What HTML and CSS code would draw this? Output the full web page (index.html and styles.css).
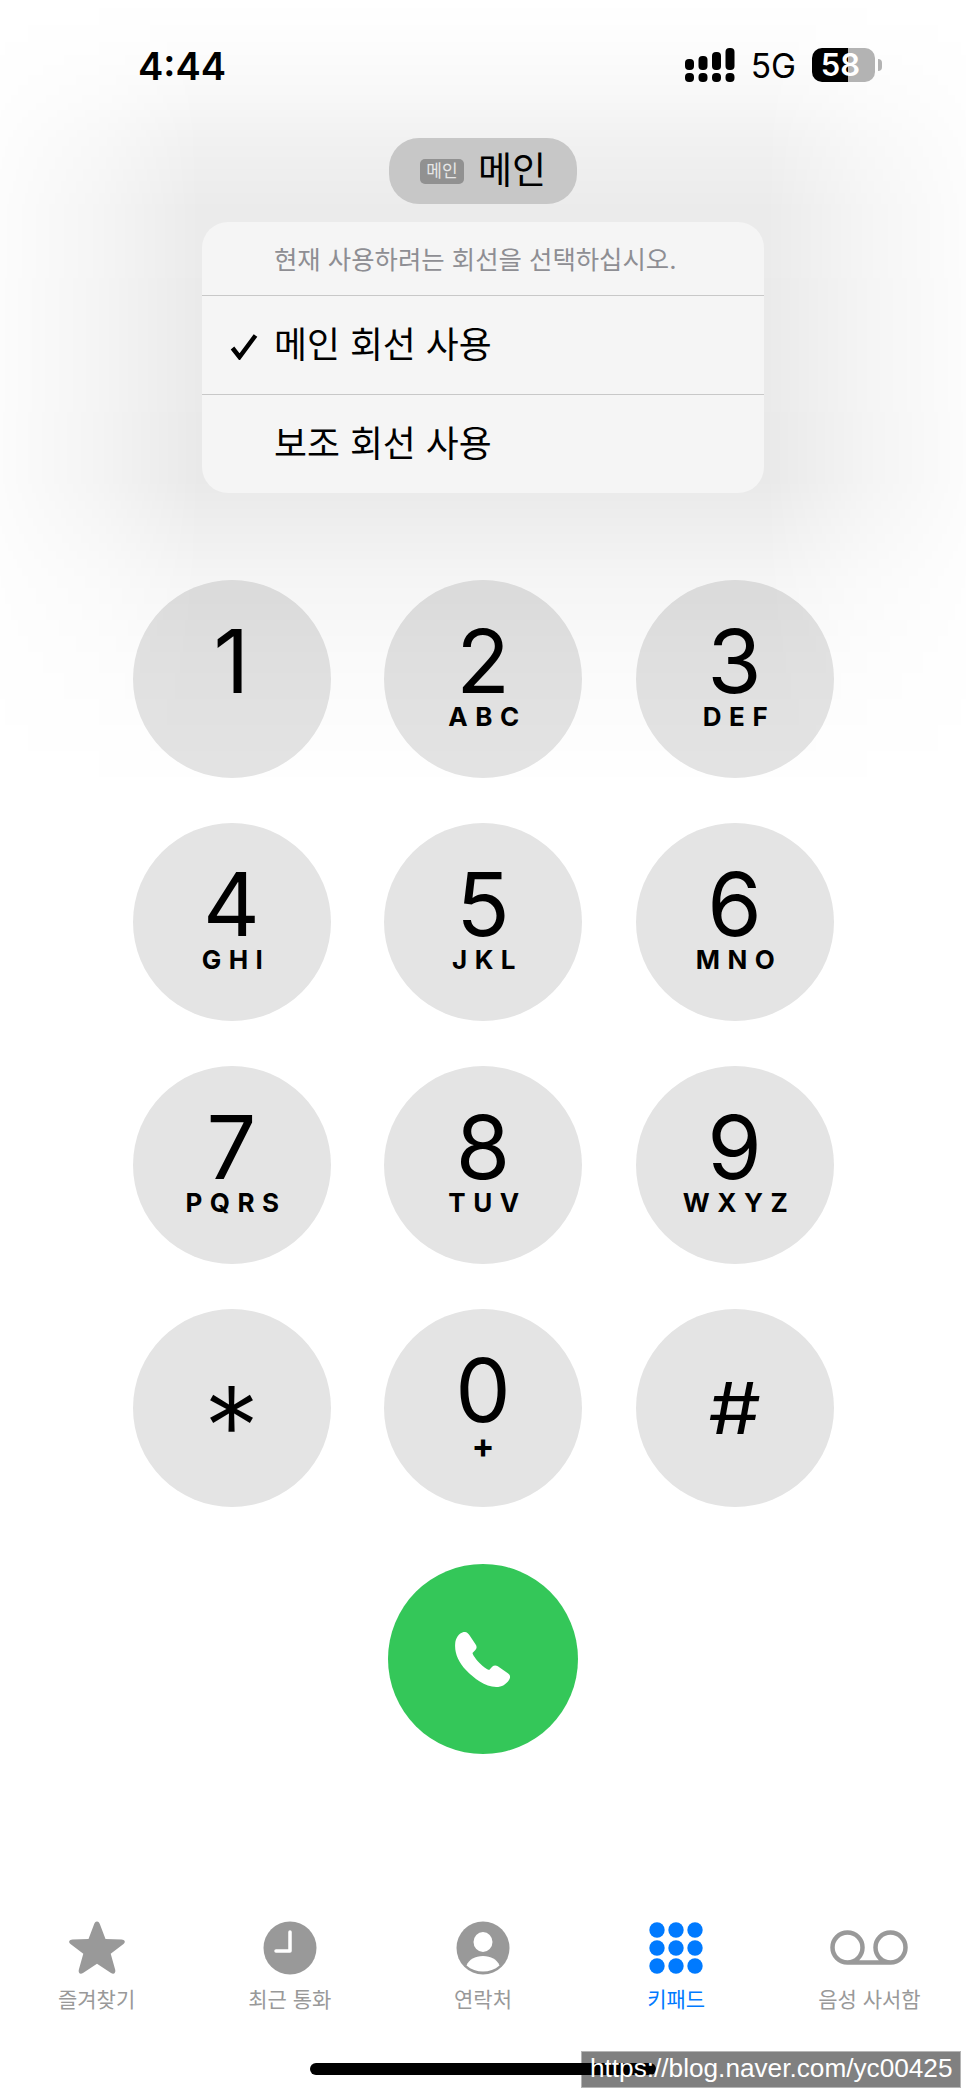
FILE: index.html

```html
<!DOCTYPE html>
<html lang="ko">
<head>
    <meta charset="UTF-8">
    <title>키패드</title>
    <link rel="stylesheet" href="styles.css">
</head>
<body>
    <div class="dim"></div>

    <div class="status">
        <span class="time">4:44</span>
        <div class="status-right">
            <svg class="signal" width="50" height="36" viewBox="0 0 50 36">
                <rect x="0" y="11" width="9" height="11" rx="4" />
                <rect x="13.5" y="8" width="9" height="14" rx="4" />
                <rect x="27" y="4" width="9" height="18" rx="4" />
                <rect x="40.5" y="0" width="9" height="22" rx="4" />
                <rect x="0" y="25" width="9" height="9" rx="4" />
                <rect x="13.5" y="25" width="9" height="9" rx="4" />
                <rect x="27" y="25" width="9" height="9" rx="4" />
                <rect x="40.5" y="25" width="9" height="9" rx="4" />
            </svg>
            <span class="net">5G</span>
            <div class="battery">58</div>
            <div class="battery-cap"></div>
        </div>
    </div>

    <div class="pill">
        <span class="pill-badge">메인</span>
        <span class="pill-name">메인</span>
    </div>

    <div class="menu">
        <div class="menu-title">현재 사용하려는 회선을 선택하십시오.</div>
        <div class="menu-row">
            <svg class="check" width="28" height="27" viewBox="0 0 28 27">
                <path d="M2.5 15 L9.5 24 L25.5 2.5" />
            </svg>
            메인 회선 사용
        </div>
        <div class="menu-row">보조 회선 사용</div>
    </div>

    <div class="keypad">
        <div class="key"><span class="digit">1</span></div>
        <div class="key"><span class="digit">2</span><span class="letters">ABC</span></div>
        <div class="key"><span class="digit">3</span><span class="letters">DEF</span></div>
        <div class="key"><span class="digit">4</span><span class="letters">GHI</span></div>
        <div class="key"><span class="digit">5</span><span class="letters">JKL</span></div>
        <div class="key"><span class="digit">6</span><span class="letters">MNO</span></div>
        <div class="key"><span class="digit">7</span><span class="letters">PQRS</span></div>
        <div class="key"><span class="digit">8</span><span class="letters">TUV</span></div>
        <div class="key"><span class="digit">9</span><span class="letters">WXYZ</span></div>
        <div class="key key-sym"><span class="star">*</span></div>
        <div class="key"><span class="digit">0</span><span class="letters plus">+</span></div>
        <div class="key key-sym"><span class="hash">#</span></div>
    </div>

    <div class="call">
        <svg width="56" height="55" viewBox="75 97 167 165">
            <path d="M100 97 C108 96 113 100 118 107 L136 134 C141 141 140 147 135 152 L127 160 C128 166 136 177 148 190 C160 202 170 209 177 211 L186 201 C191 197 197 196 203 200 L232 220 C240 225 242 232 237 240 C228 254 215 262 198 262 C165 262 130 235 108 212 C85 188 73 160 75 133 C76 115 86 101 100 97 Z" />
        </svg>
    </div>

    <div class="tabs">
        <div class="tab">
            <div class="tab-icon">
                <svg width="58" height="56" viewBox="0 0 58 56">
                    <path class="fill" d="M29 1.5 C30.5 1.5 31.3 2.5 32 4.5 L37.5 19 L53.5 19.5 C56.8 19.6 58 22 55.5 24 L42.7 33.8 L47.2 49.8 C48 53 45.8 54.8 43 53 L29 43.7 L15 53 C12.2 54.8 10 53 10.8 49.8 L15.3 33.8 L2.5 24 C0 22 1.2 19.6 4.5 19.5 L20.5 19 L26 4.5 C26.7 2.5 27.5 1.5 29 1.5 Z" />
                </svg>
            </div>
            <span class="tab-label">즐겨찾기</span>
        </div>
        <div class="tab">
            <div class="tab-icon">
                <svg width="54" height="54" viewBox="0 0 54 54">
                    <circle class="fill" cx="27" cy="27" r="26.5" />
                    <path class="hands" d="M27 11 V30 H13" />
                </svg>
            </div>
            <span class="tab-label">최근 통화</span>
        </div>
        <div class="tab">
            <div class="tab-icon">
                <svg width="54" height="54" viewBox="0 0 54 54">
                    <circle class="fill" cx="27" cy="27" r="26.5" />
                    <ellipse class="white" cx="27" cy="21" rx="9.5" ry="10" />
                    <path class="white" d="M10.5 44.5 C13 38.5 19 35 27 35 C35 35 41 38.5 43.5 44.5 C39 48.5 33 50.5 27 50.5 C21 50.5 15 48.5 10.5 44.5 Z" />
                </svg>
            </div>
            <span class="tab-label">연락처</span>
        </div>
        <div class="tab tab-active">
            <div class="tab-icon">
                <svg width="54" height="54" viewBox="0 0 54 54">
                    <circle cx="8" cy="9" r="7.7" />
                    <circle cx="27" cy="9" r="7.7" />
                    <circle cx="46" cy="9" r="7.7" />
                    <circle cx="8" cy="27" r="7.7" />
                    <circle cx="27" cy="27" r="7.7" />
                    <circle cx="46" cy="27" r="7.7" />
                    <circle cx="8" cy="45" r="7.7" />
                    <circle cx="27" cy="45" r="7.7" />
                    <circle cx="46" cy="45" r="7.7" />
                </svg>
            </div>
            <span class="tab-label">키패드</span>
        </div>
        <div class="tab">
            <div class="tab-icon">
                <svg width="78" height="36" viewBox="0 0 78 36">
                    <path class="voicemail" d="M17.5 32.5 H60.5 M17.5 32.5 A15 15 0 1 1 17.5 2.5 A15 15 0 1 1 17.5 32.5 Z M60.5 32.5 A15 15 0 1 1 60.5 2.5 A15 15 0 1 1 60.5 32.5 Z" />
                </svg>
            </div>
            <span class="tab-label">음성 사서함</span>
        </div>
    </div>

    <div class="home-bar"></div>

    <div class="watermark"><span class="watermark-text">https://blog.naver.com/yc00425</span></div>
</body>
</html>
```

FILE: styles.css

```css
* {
    box-sizing: border-box;
}
body {
    margin: 0;
    height: 2094px;
    overflow: hidden;
    position: relative;
    background: #fff;
    color: #000;
    font-family: Inter, "Noto Sans CJK KR", sans-serif;
}

/* soft shade the open menu throws over the page */
.dim {
    position: absolute;
    left: 0;
    top: 0;
    width: 966px;
    height: 800px;
    z-index: 1;
    background: linear-gradient(180deg,
        rgba(0, 0, 0, 0) 0,
        rgba(0, 0, 0, 0.01) 50px,
        rgba(0, 0, 0, 0.03) 100px,
        rgba(0, 0, 0, 0.055) 140px,
        rgba(0, 0, 0, 0.08) 210px,
        rgba(0, 0, 0, 0.085) 480px,
        rgba(0, 0, 0, 0.04) 580px,
        rgba(0, 0, 0, 0.018) 660px,
        rgba(0, 0, 0, 0) 790px);
    -webkit-mask-image: linear-gradient(90deg, rgba(0, 0, 0, 0.15) 0, rgba(0, 0, 0, 0.5) 100px, #000 200px, #000 766px, rgba(0, 0, 0, 0.5) 866px, rgba(0, 0, 0, 0.15) 966px);
    mask-image: linear-gradient(90deg, rgba(0, 0, 0, 0.15) 0, rgba(0, 0, 0, 0.5) 100px, #000 200px, #000 766px, rgba(0, 0, 0, 0.5) 866px, rgba(0, 0, 0, 0.15) 966px);
}

/* status bar */
.status {
    height: 138px;
    padding: 48px 84px 0 138px;
    display: flex;
    justify-content: space-between;
    align-items: flex-start;
    position: relative;
    z-index: 2;
}
.time {
    font-size: 38px;
    line-height: 36px;
    font-weight: 600;
}
.status-right {
    display: flex;
    align-items: flex-start;
}
.signal {
    fill: #000;
    margin-right: 16px;
}
.net {
    font-size: 33.5px;
    line-height: 36px;
    margin-right: 16px;
}
.battery {
    width: 63px;
    height: 34px;
    border-radius: 10px;
    background: linear-gradient(90deg, #000 36px, #b3b3b3 36px);
    color: #fff;
    font-size: 31px;
    font-weight: 600;
    line-height: 34px;
    text-align: center;
    padding-right: 6px;
}
.battery-cap {
    width: 4px;
    height: 12px;
    margin: 11px 0 0 3px;
    border-radius: 0 4px 4px 0;
    background: #b3b3b3;
}

/* line picker */
.pill {
    width: 188px;
    height: 66px;
    margin: 0 auto;
    border-radius: 30px;
    background: #c7c7c7;
    display: flex;
    align-items: center;
    justify-content: center;
    gap: 14px;
    position: relative;
    z-index: 2;
}
.pill-badge {
    width: 44px;
    height: 25px;
    border-radius: 5px;
    background: #919191;
    color: #e6e6e6;
    font-size: 17px;
    line-height: 25px;
    text-align: center;
}
.pill-name {
    font-size: 37px;
    line-height: 40px;
}
.menu {
    width: 562px;
    height: 271px;
    margin: 18px auto 0;
    border-radius: 26px;
    background: #f5f5f5;
    position: relative;
    z-index: 2;
}
.menu-title {
    height: 73px;
    padding-left: 72px;
    font-size: 25.4px;
    line-height: 76px;
    color: #8e8e93;
}
.menu-row {
    height: 99px;
    border-top: 1px solid #c8c8c8;
    padding-left: 72px;
    font-size: 35.8px;
    line-height: 98px;
    position: relative;
}
.check {
    position: absolute;
    left: 28px;
    top: 37px;
    fill: none;
    stroke: #000;
    stroke-width: 4.5;
}

/* dial keys */
.keypad {
    width: 701px;
    margin: 87px auto 0;
    display: grid;
    grid-template-columns: repeat(3, 198px);
    column-gap: 53.5px;
    row-gap: 45px;
}
.key {
    height: 198px;
    border-radius: 50%;
    background: #e4e4e4;
    display: flex;
    flex-direction: column;
    align-items: center;
    padding-top: 42px;
}
.key-sym {
    padding-top: 0;
    justify-content: center;
}
.digit {
    font-size: 88px;
    line-height: 78px;
    font-weight: 400;
}
.letters {
    font-size: 26px;
    line-height: 24px;
    font-weight: 700;
    letter-spacing: 7.5px;
    margin: 5px 0 0 9px;
}
.plus {
    margin-left: 0;
    letter-spacing: 0;
    font-size: 34px;
}
.star {
    font-size: 112px;
    line-height: 112px;
    font-weight: 300;
    padding-top: 36px;
}
.hash {
    font-size: 72px;
    line-height: 80px;
    transform: scaleX(1.15);
}
.call {
    width: 190px;
    height: 190px;
    margin: 57px auto 0;
    border-radius: 50%;
    background: #34c759;
    display: flex;
    align-items: center;
    justify-content: center;
    fill: #fff;
}

/* tab bar */
.tabs {
    margin-top: 166px;
    display: grid;
    grid-template-columns: repeat(5, 1fr);
}
.tab {
    display: flex;
    flex-direction: column;
    align-items: center;
    color: #999;
}
.tab-active {
    color: #007aff;
    fill: #007aff;
}
.tab-icon {
    height: 56px;
    display: flex;
    align-items: center;
}
.tab-label {
    margin-top: 9px;
    font-size: 21px;
    line-height: 30px;
}
.fill {
    fill: #999;
}
.white {
    fill: #fff;
}
.hands {
    fill: none;
    stroke: #fff;
    stroke-width: 3.5;
    stroke-linecap: round;
    stroke-linejoin: round;
}
.voicemail {
    fill: none;
    stroke: #999;
    stroke-width: 4.5;
}

/* bottom */
.home-bar {
    width: 346px;
    height: 12px;
    margin: 48px auto 0;
    border-radius: 6px;
    background: #000;
    position: relative;
    z-index: 2;
}
.watermark {
    position: absolute;
    left: 581px;
    top: 2051px;
    width: 378px;
    height: 35px;
    padding-left: 9px;
}
.watermark::before {
    content: "";
    position: absolute;
    left: 0;
    top: 0;
    width: 378px;
    height: 35px;
    background: #808080;
    border: 1px solid #b5b5b5;
    z-index: 1;
}
.watermark-text {
    position: relative;
    z-index: 3;
    font-family: "Liberation Sans", sans-serif;
    font-size: 26.2px;
    line-height: 35px;
    color: #fff;
}
```
